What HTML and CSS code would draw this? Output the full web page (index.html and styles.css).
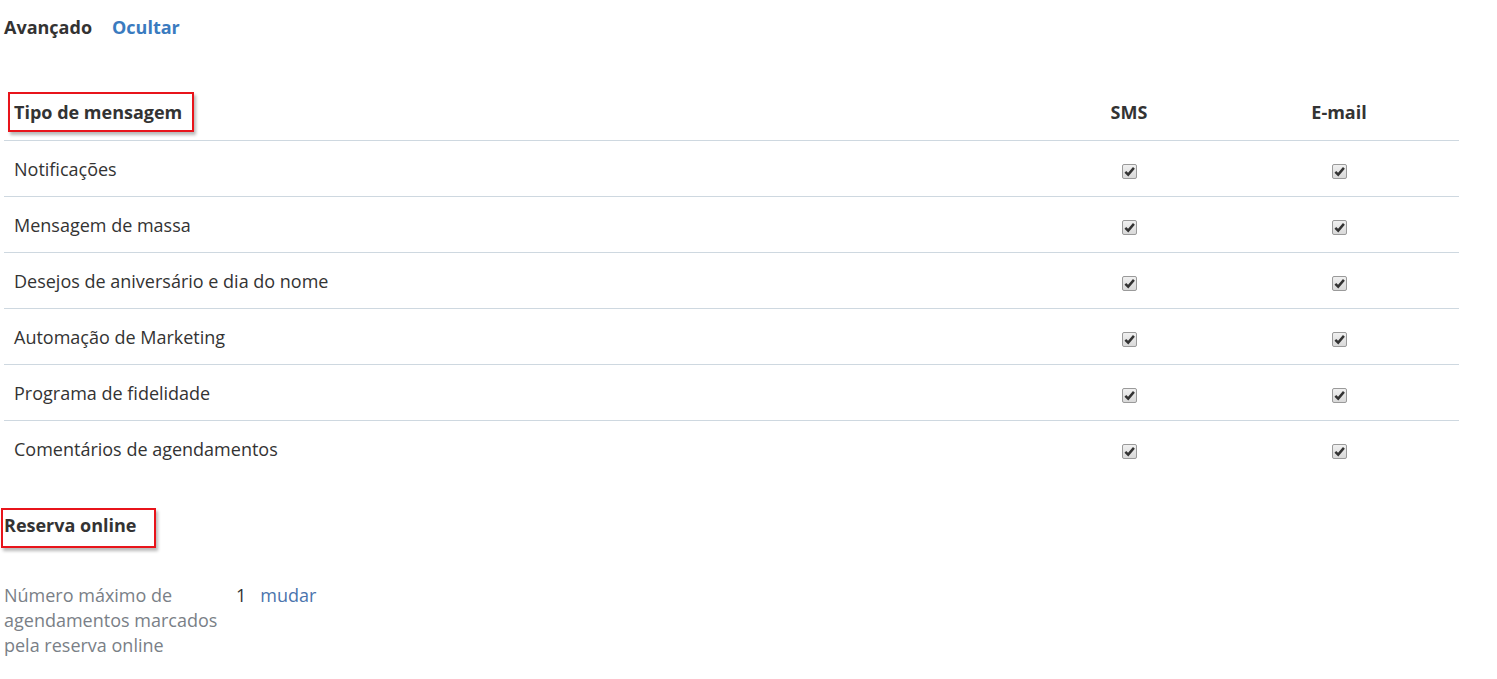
FILE: index.html
```html
<!DOCTYPE html>
<html lang="pt">
<head>
<meta charset="utf-8">
<title>Avançado</title>
<link rel="stylesheet" href="styles.css">
</head>
<body>
<div class="page">
  <div class="top">
    <span class="top-title">Avançado</span>
    <a class="top-link" href="#">Ocultar</a>
  </div>

  <table class="msg-table">
    <thead>
      <tr>
        <th class="col-name"><span class="hl hl-type">Tipo de mensagem</span></th>
        <th class="col-sms">SMS</th>
        <th class="col-email">E-mail</th>
      </tr>
    </thead>
    <tbody>
      <tr><td>Notificações</td><td class="c"><span class="cb"><svg viewBox="0 0 10 10"><path d="M1.8 5.2 L4 7.4 L8.4 2.2" /></svg></span></td><td class="c"><span class="cb"><svg viewBox="0 0 10 10"><path d="M1.8 5.2 L4 7.4 L8.4 2.2" /></svg></span></td></tr>
      <tr><td>Mensagem de massa</td><td class="c"><span class="cb"><svg viewBox="0 0 10 10"><path d="M1.8 5.2 L4 7.4 L8.4 2.2" /></svg></span></td><td class="c"><span class="cb"><svg viewBox="0 0 10 10"><path d="M1.8 5.2 L4 7.4 L8.4 2.2" /></svg></span></td></tr>
      <tr><td>Desejos de aniversário e dia do nome</td><td class="c"><span class="cb"><svg viewBox="0 0 10 10"><path d="M1.8 5.2 L4 7.4 L8.4 2.2" /></svg></span></td><td class="c"><span class="cb"><svg viewBox="0 0 10 10"><path d="M1.8 5.2 L4 7.4 L8.4 2.2" /></svg></span></td></tr>
      <tr><td>Automação de Marketing</td><td class="c"><span class="cb"><svg viewBox="0 0 10 10"><path d="M1.8 5.2 L4 7.4 L8.4 2.2" /></svg></span></td><td class="c"><span class="cb"><svg viewBox="0 0 10 10"><path d="M1.8 5.2 L4 7.4 L8.4 2.2" /></svg></span></td></tr>
      <tr><td>Programa de fidelidade</td><td class="c"><span class="cb"><svg viewBox="0 0 10 10"><path d="M1.8 5.2 L4 7.4 L8.4 2.2" /></svg></span></td><td class="c"><span class="cb"><svg viewBox="0 0 10 10"><path d="M1.8 5.2 L4 7.4 L8.4 2.2" /></svg></span></td></tr>
      <tr><td>Comentários de agendamentos</td><td class="c"><span class="cb"><svg viewBox="0 0 10 10"><path d="M1.8 5.2 L4 7.4 L8.4 2.2" /></svg></span></td><td class="c"><span class="cb"><svg viewBox="0 0 10 10"><path d="M1.8 5.2 L4 7.4 L8.4 2.2" /></svg></span></td></tr>
    </tbody>
  </table>

  <div class="section">
    <span class="hl hl-online">Reserva online</span>
  </div>

  <div class="setting">
    <div class="setting-label">Número máximo de agendamentos marcados pela reserva online</div>
    <div class="setting-value">1</div>
    <a class="setting-link" href="#">mudar</a>
  </div>
</div>
</body>
</html>
```

FILE: styles.css
```css
html, body {
  margin: 0;
  padding: 0;
  background: #fff;
}

body {
  font-family: "Open Sans", "Liberation Sans", sans-serif;
  font-size: 18px;
  color: #333;
}

.page {
  padding: 0 0 0 4px;
}

.top {
  display: flex;
  align-items: center;
  gap: 20px;
  height: 54px;
}

.top-title {
  font-weight: 700;
  color: #333;
}

.top-link {
  font-weight: 700;
  color: #3a7bbf;
  text-decoration: none;
}

.msg-table {
  width: 1455px;
  border-collapse: collapse;
  margin-top: 30px;
}

.msg-table th {
  height: 56px;
  font-weight: 700;
  text-align: center;
  padding: 0;
  border-bottom: 1px solid #ced8e0;
}

.msg-table th.col-name {
  text-align: left;
  padding-left: 10px;
}

.col-sms { width: 180px; }
.col-email { width: 240px; }

.msg-table td {
  height: 55px;
  padding: 0 0 0 10px;
  border-bottom: 1px solid #ced8e0;
  line-height: 24px;
}

.msg-table tbody tr:last-child td {
  border-bottom: none;
}

.msg-table td.c {
  padding: 0;
  text-align: center;
}

.hl {
  position: relative;
}

.hl::after {
  content: "";
  position: absolute;
  border: 2px solid #e8141b;
  box-shadow: 2px 3px 3px rgba(0, 0, 0, 0.28);
  pointer-events: none;
}

.hl-type::after {
  left: -6px;
  top: -8px;
  right: -12px;
  bottom: -8px;
}

.hl-online::after {
  left: -3px;
  top: -5px;
  right: -19px;
  bottom: -10px;
}

.cb {
  display: inline-block;
  width: 13px;
  height: 13px;
  margin-top: 2px;
  border: 1px solid #9a9a9a;
  border-radius: 2px;
  background: linear-gradient(#f0f0f0, #d9d9d9);
  vertical-align: middle;
}

.cb svg {
  display: block;
  width: 13px;
  height: 13px;
}

.cb path {
  fill: none;
  stroke: #333;
  stroke-width: 1.9;
}

.section {
  margin-top: 37px;
  font-weight: 700;
  height: 25px;
  line-height: 25px;
}

.hl-online {
  display: inline-block;
}

.setting {
  display: flex;
  align-items: flex-start;
  margin-top: 45px;
  line-height: 25px;
}

.setting-label {
  width: 218px;
  color: #7a7f87;
}

.setting-value {
  margin-left: 14px;
  color: #333;
}

.setting-link {
  margin-left: 14px;
  color: #4a74ad;
  text-decoration: none;
}
```
